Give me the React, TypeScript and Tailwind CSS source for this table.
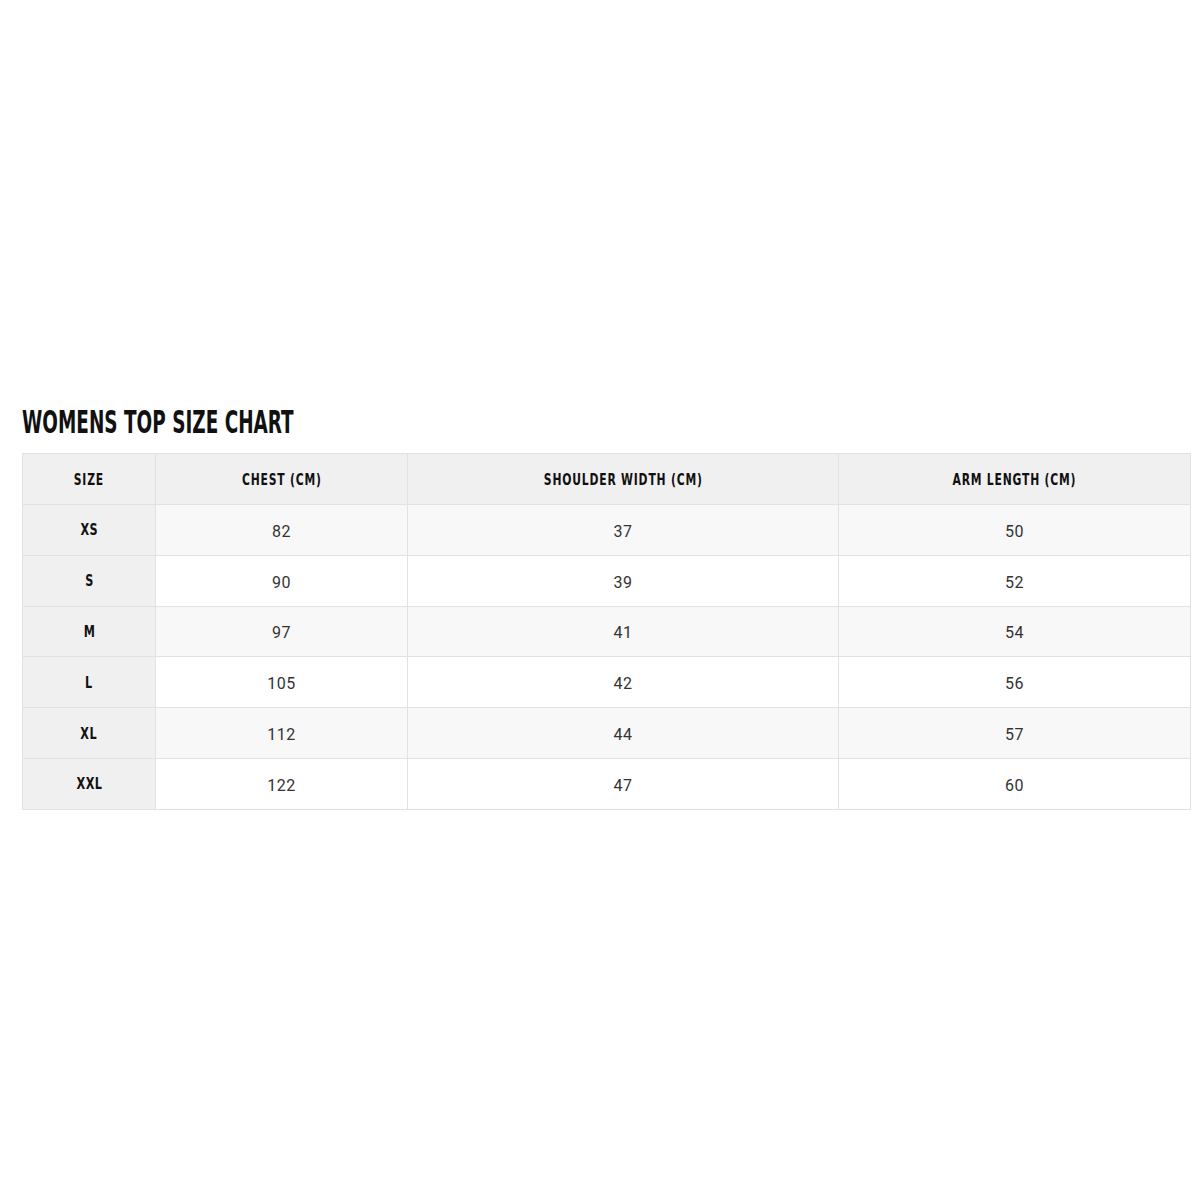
const rows = [
  { size: "XS", chest: "82", shoulder: "37", arm: "50" },
  { size: "S", chest: "90", shoulder: "39", arm: "52" },
  { size: "M", chest: "97", shoulder: "41", arm: "54" },
  { size: "L", chest: "105", shoulder: "42", arm: "56" },
  { size: "XL", chest: "112", shoulder: "44", arm: "57" },
  { size: "XXL", chest: "122", shoulder: "47", arm: "60" },
];

const condensed = "font-['DejaVu_Sans_Condensed',sans-serif]";

export default function App() {
  return (
    <div className="w-[1200px] h-[1200px] bg-white">
      <div className="pt-[403px] pl-[22px]">
        <h1
          className={`${condensed} inline-block font-bold text-[32px] leading-[38px] text-[#111] scale-x-[0.64] origin-left whitespace-nowrap`}
        >
          WOMENS TOP SIZE CHART
        </h1>
        <table className="mt-[12px] w-[1168px] table-fixed border-collapse border border-[#e2e2e2]">
          <colgroup>
            <col className="w-[133px]" />
            <col className="w-[252px]" />
            <col className="w-[431px]" />
            <col className="w-[352px]" />
          </colgroup>
          <thead>
            <tr className="h-[51px] bg-[#f0f0f0]">
              {["SIZE", "CHEST (CM)", "SHOULDER WIDTH (CM)", "ARM LENGTH (CM)"].map((h) => (
                <th key={h} className="border border-[#e2e2e2] text-center pt-[1px]">
                  <span
                    className={`${condensed} inline-block scale-x-[0.8] whitespace-nowrap text-[15px] font-bold tracking-[1px] text-[#111]`}
                  >
                    {h}
                  </span>
                </th>
              ))}
            </tr>
          </thead>
          <tbody>
            {rows.map((r, i) => (
              <tr key={r.size} className={`h-[50.8px] ${i % 2 === 0 ? "bg-[#f8f8f8]" : "bg-white"}`}>
                <td className="bg-[#f0f0f0] border border-[#e2e2e2] text-center">
                  <span
                    className={`${condensed} inline-block scale-x-[0.78] text-[16px] font-bold tracking-[0.5px] text-[#111]`}
                  >
                    {r.size}
                  </span>
                </td>
                {[r.chest, r.shoulder, r.arm].map((v, j) => (
                  <td
                    key={j}
                    className="font-['Roboto',sans-serif] border border-[#e2e2e2] text-[16px] text-[#333] text-center tracking-[0.5px] pt-[4px]"
                  >
                    {v}
                  </td>
                ))}
              </tr>
            ))}
          </tbody>
        </table>
      </div>
    </div>
  );
}
